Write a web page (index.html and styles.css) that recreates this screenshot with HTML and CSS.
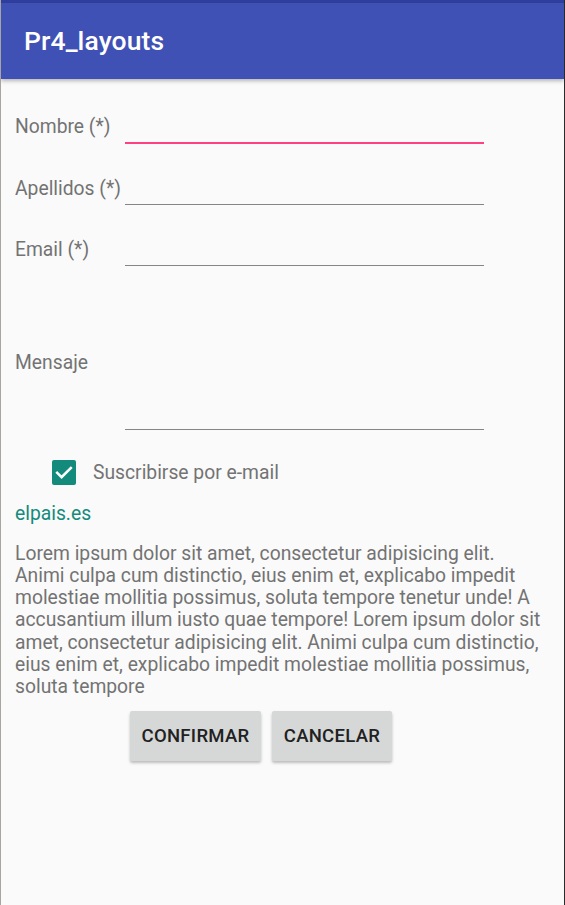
FILE: index.html
```html
<!DOCTYPE html>
<html lang="es">
<head>
<meta charset="utf-8">
<title>Pr4_layouts</title>
<link rel="stylesheet" href="styles.css">
</head>
<body>
<div class="screen">
  <div class="status"></div>
  <header class="appbar"><h1 class="title">Pr4_layouts</h1></header>
  <main class="content">
    <div class="row row-first">
      <label class="label">Nombre (*)</label>
      <div class="field field-focus"></div>
    </div>
    <div class="row">
      <label class="label">Apellidos (*)</label>
      <div class="field"></div>
    </div>
    <div class="row">
      <label class="label">Email (*)</label>
      <div class="field"></div>
    </div>
    <div class="row row-msg">
      <label class="label">Mensaje</label>
      <div class="field field-msg"></div>
    </div>
    <div class="check-row">
      <span class="checkbox">
        <svg width="24" height="25" viewBox="0 0 24 25"><rect x="0" y="0" width="24" height="25" rx="2" fill="#138a7b"/><path d="M5.2 12.8 L9.6 17.2 L18.8 8" fill="none" stroke="#fff" stroke-width="2.6" stroke-linecap="square"/></svg>
      </span>
      <span class="check-label">Suscribirse por e-mail</span>
    </div>
    <a class="link" href="#">elpais.es</a>
    <p class="lorem">Lorem ipsum dolor sit amet, consectetur adipisicing elit. Animi culpa cum distinctio, eius enim et, explicabo impedit molestiae mollitia possimus, soluta tempore tenetur unde! A accusantium illum iusto quae tempore! Lorem ipsum dolor sit amet, consectetur adipisicing elit. Animi culpa cum distinctio, eius enim et, explicabo impedit molestiae mollitia possimus, soluta tempore</p>
    <div class="buttons">
      <button class="btn btn-confirm">CONFIRMAR</button>
      <button class="btn btn-cancel">CANCELAR</button>
    </div>
  </main>
</div>
</body>
</html>
```
FILE: styles.css
```css
html, body {
  margin: 0;
  padding: 0;
  height: 100%;
}
body {
  font-family: Roboto, "Noto Sans", sans-serif;
  background: #fafafa;
}
.screen {
  height: 905px;
  box-sizing: border-box;
  border-left: 1px solid #a8a49f;
  border-right: 1px solid #2a2a2a;
  background: #fafafa;
  display: flex;
  flex-direction: column;
  overflow: hidden;
}
.status {
  height: 3px;
  background: #303f9f;
}
.appbar {
  height: 76px;
  background: #3f51b5;
  display: flex;
  align-items: center;
  padding-left: 23px;
  box-shadow: 0 2px 4px rgba(0,0,0,0.28);
  position: relative;
  z-index: 1;
}
.title {
  margin: 0 0 2px 0;
  color: #fff;
  font-size: 26.5px;
  font-weight: 500;
  letter-spacing: 0.1px;
}
.content {
  padding-left: 14px;
  color: #737373;
  font-size: 19.3px;
}
.row {
  display: flex;
  align-items: flex-start;
  height: 61.5px;
}
.row-first {
  margin-top: 37px;
}
.label {
  width: 110px;
  line-height: 22px;
  white-space: nowrap;
}
.field {
  width: 359px;
  height: 26px;
  border-bottom: 1.5px solid #858585;
}
.field-focus {
  border-bottom: 2px solid #ff4081;
}
.row-msg {
  margin-top: 51px;
  height: 92px;
}
.field-msg {
  height: 77px;
}
.check-row {
  display: flex;
  align-items: center;
  padding-left: 37px;
  height: 28px;
  margin-top: 15px;
}
.checkbox {
  width: 24px;
  height: 25px;
  display: flex;
}
.check-label {
  margin-left: 17px;
  line-height: 22px;
}
.link {
  display: block;
  margin-top: 16px;
  color: #138a7b;
  text-decoration: none;
  line-height: 22px;
}
.lorem {
  margin: 18px 0 0 0;
  width: 528px;
  line-height: 22.3px;
}
.buttons {
  display: flex;
  gap: 11px;
  margin-top: 12px;
  padding-left: 115px;
}
.btn {
  font-family: Roboto, "Noto Sans", sans-serif;
  font-size: 18.5px;
  font-weight: 500;
  color: #212121;
  background: #d6d7d7;
  border: none;
  border-radius: 2px;
  height: 50px;
  padding: 0;
  box-shadow: 0 2px 3px rgba(0,0,0,0.25);
  letter-spacing: 0.3px;
}
.btn-confirm { width: 131px; }
.btn-cancel { width: 120px; }
```
